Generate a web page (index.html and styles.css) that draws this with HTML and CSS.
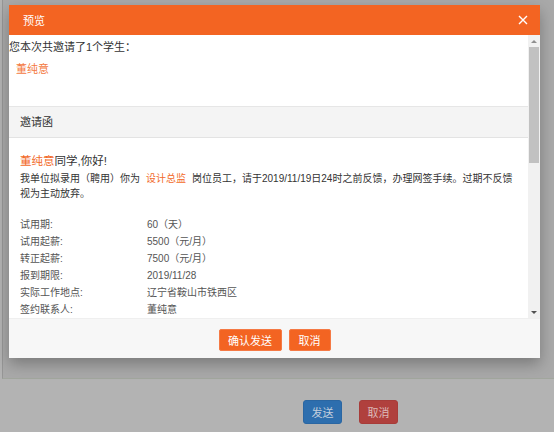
FILE: index.html
```html
<!DOCTYPE html>
<html lang="zh-CN">
<head>
<meta charset="utf-8">
<title>预览</title>
<link rel="stylesheet" href="styles.css">
</head>
<body>
<div class="page">
  <div class="panel"></div>
  <div class="actions">
    <button class="pbtn blue">发送</button>
    <button class="pbtn red">取消</button>
  </div>
</div>

<div class="modal">
  <div class="modal-head">
    <span class="title">预览</span>
    <svg class="close" width="10" height="10" viewBox="0 0 10 10"><path d="M1 1L9 9M9 1L1 9" stroke="#fff" stroke-width="1.4" fill="none"/></svg>
  </div>
  <div class="modal-main">
    <div class="content">
      <div class="intro">
        <p class="intro-line">您本次共邀请了1个学生：</p>
        <p class="names">董纯意</p>
      </div>
      <div class="band">邀请函</div>
      <div class="letter">
        <p class="greet"><span class="hl">董纯意</span>同学,你好!</p>
        <p class="para">我单位拟录用（聘用）你为<span class="hl job">设计总监</span>岗位员工，请于2019/11/19日24时之前反馈，办理网签手续。过期不反馈<br>视为主动放弃。</p>
        <div class="rows">
          <span>试用期:</span><span>60（天）</span>
          <span>试用起薪:</span><span>5500（元/月）</span>
          <span>转正起薪:</span><span>7500（元/月）</span>
          <span>报到期限:</span><span>2019/11/28</span>
          <span>实际工作地点:</span><span>辽宁省鞍山市铁西区</span>
          <span>签约联系人:</span><span>董纯意</span>
        </div>
      </div>
    </div>
    <div class="scrollbar">
      <div class="sb-btn"><span class="tri up"></span></div>
      <div class="sb-thumb"></div>
      <div class="sb-track"></div>
      <div class="sb-btn"><span class="tri down"></span></div>
    </div>
  </div>
  <div class="modal-foot">
    <button class="mbtn wide">确认发送</button>
    <button class="mbtn">取消</button>
  </div>
</div>
</body>
</html>
```

FILE: styles.css
```css
* { box-sizing: border-box; }
html, body { margin: 0; padding: 0; }
body {
  width: 554px;
  height: 432px;
  overflow: hidden;
  background: #b3b3b3;
  font-family: "Liberation Sans", "Noto Sans CJK SC", sans-serif;
  color: #333;
  position: relative;
}
p { margin: 0; }

.page { width: 554px; height: 432px; }
.panel {
  height: 379px;
  margin-left: 2px;
  background: #a9a9a9;
  border-left: 1px solid #969696;
  border-bottom: 1px solid #a1a69d;
}
.actions {
  display: flex;
  gap: 17px;
  padding: 21px 0 0 303px;
}
.pbtn {
  height: 24px;
  width: 39px;
  border: 1px solid transparent;
  border-radius: 3px;
  font-family: inherit;
  font-size: 11px;
  padding: 0;
  white-space: nowrap;
}
.pbtn.blue { background: #2d6eae; border-color: #2a66a2; color: #c3cfdd; }
.pbtn.red { background: #b0403d; border-color: #a73c39; color: #dcb9b8; }

.modal {
  position: absolute;
  left: 9px;
  top: 5px;
  width: 531px;
  height: 353px;
  background: #fff;
  display: flex;
  flex-direction: column;
  box-shadow: 0 6px 14px rgba(0,0,0,0.28);
}
.modal-head {
  height: 30px;
  background: #f36422;
  display: flex;
  align-items: center;
  justify-content: space-between;
  padding: 0 12px 0 14px;
}
.title { color: #fff; font-size: 11px; }
.close { display: block; }

.modal-main {
  height: 283px;
  display: flex;
  overflow: hidden;
}
.content {
  flex: 1;
  overflow: hidden;
}
.intro {
  height: 71px;
  padding-top: 1px;
}
.intro-line { font-size: 11px; line-height: 22px; color: #333; }
.names { font-size: 11px; line-height: 22px; padding-left: 7px; color: #f47a42; }
.band {
  height: 32px;
  line-height: 30px;
  background: #f4f4f4;
  border-top: 1px solid #e6e6e6;
  border-bottom: 1px solid #e3e3e3;
  padding-left: 11px;
  font-size: 11px;
  color: #333;
}
.letter { padding: 0 11px; }
.greet { margin-top: 13px; font-size: 11.5px; line-height: 20px; color: #333; }
.hl { color: #f26a2a; }
.para { font-size: 10px; line-height: 15px; color: #333; white-space: nowrap; }
.job { padding: 0 6px 0 6px; }
.rows {
  margin-top: 15px;
  display: grid;
  grid-template-columns: 127px auto;
  font-size: 10px;
  line-height: 17px;
  color: #555;
}

.scrollbar {
  width: 12px;
  display: flex;
  flex-direction: column;
  background: #f1f1f1;
}
.sb-btn {
  height: 12px;
  display: flex;
  align-items: center;
  justify-content: center;
  background: #f1f1f1;
}
.tri { width: 0; height: 0; border-left: 3px solid transparent; border-right: 3px solid transparent; }
.tri.up { border-bottom: 3px solid #8f8f8f; }
.tri.down { border-top: 3px solid #505050; }
.sb-thumb {
  height: 116px;
  margin: 0 1px;
  background: #c1c1c1;
}
.sb-track { flex: 1; }

.modal-foot {
  height: 40px;
  background: #f7f7f7;
  border-top: 1px solid #efefef;
  display: flex;
  justify-content: center;
  gap: 7px;
  padding-top: 10px;
}
.mbtn {
  height: 22px;
  width: 42px;
  padding: 0;
  background: #f36422;
  border: 1px solid #f57a45;
  border-radius: 2px;
  color: #fff;
  font-family: inherit;
  font-size: 11px;
  white-space: nowrap;
}
.mbtn.wide { width: 63px; }
```
